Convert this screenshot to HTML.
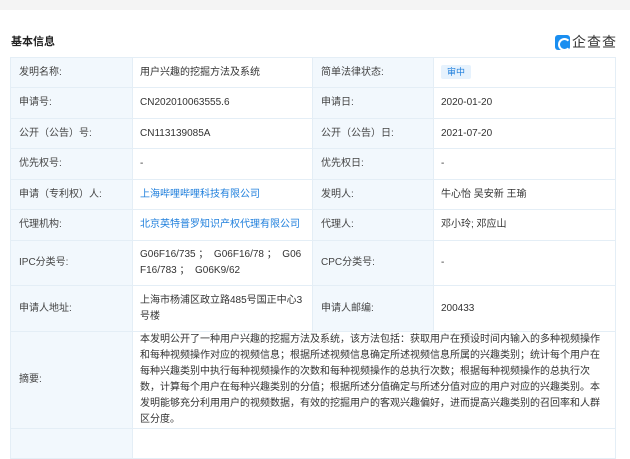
<!DOCTYPE html>
<html><head><meta charset="utf-8"><style>
*{margin:0;padding:0;box-sizing:border-box}
body{width:630px;height:431px;overflow:hidden;background:#fff;font-family:"Liberation Sans","Noto Sans CJK SC",sans-serif;color:#333;font-size:10px}
.top{height:10px;background:#f4f4f4}
.title{position:absolute;left:11px;top:33px;font-size:11px;font-weight:bold;color:#222}
.logo{position:absolute;left:555px;top:32px;display:flex;align-items:center}
.logo .ic{width:15px;height:15px;background:#1a8ef0;border-radius:3px;position:relative}
.logo .ic:after{content:"";position:absolute;left:3px;top:3px;width:9px;height:9px;border:2px solid #fff;border-radius:50%;border-right-color:transparent}
.logo span{font-size:14px;color:#333;margin-left:2px;letter-spacing:1px}
table{position:absolute;left:10px;top:57px;width:605px;border-collapse:collapse;table-layout:fixed}
td{border:1px solid #e4eef6;padding:0 7px;line-height:16px;vertical-align:middle;color:#333}
td.l{background:#f2f8fd;color:#444;padding-left:8px}
a{color:#1f7fdc;text-decoration:none}
.tag{display:inline-block;background:#e6f2fd;color:#1f7fdc;font-size:9px;padding:0 6px;line-height:14px;border-radius:2px}
</style></head><body>
<div class="top"></div>
<div class="title">基本信息</div>
<div class="logo"><div class="ic"></div><span>企查查</span></div>
<table>
<colgroup><col style="width:122px"><col style="width:180px"><col style="width:121px"><col style="width:182px"></colgroup>
<tr style="height:30px"><td class="l">发明名称:</td><td>用户兴趣的挖掘方法及系统</td><td class="l">简单法律状态:</td><td><span class="tag">审中</span></td></tr>
<tr style="height:31px"><td class="l">申请号:</td><td>CN202010063555.6</td><td class="l">申请日:</td><td>2020-01-20</td></tr>
<tr style="height:30px"><td class="l">公开（公告）号:</td><td>CN113139085A</td><td class="l">公开（公告）日:</td><td>2021-07-20</td></tr>
<tr style="height:31px"><td class="l">优先权号:</td><td>-</td><td class="l">优先权日:</td><td>-</td></tr>
<tr style="height:30px"><td class="l">申请（专利权）人:</td><td><a>上海哔哩哔哩科技有限公司</a></td><td class="l">发明人:</td><td>牛心怡 吴安新 王瑜</td></tr>
<tr style="height:31px"><td class="l">代理机构:</td><td><a>北京英特普罗知识产权代理有限公司</a></td><td class="l">代理人:</td><td>邓小玲; 邓应山</td></tr>
<tr style="height:45px"><td class="l">IPC分类号:</td><td style="word-break:break-all">G06F16/735 ；&nbsp; G06F16/78 ；&nbsp; G06F16/783 ；&nbsp; G06K9/62</td><td class="l">CPC分类号:</td><td>-</td></tr>
<tr style="height:46px"><td class="l">申请人地址:</td><td>上海市杨浦区政立路485号国正中心3号楼</td><td class="l">申请人邮编:</td><td>200433</td></tr>
<tr style="height:92px"><td class="l">摘要:</td><td colspan="3">本发明公开了一种用户兴趣的挖掘方法及系统，该方法包括：获取用户在预设时间内输入的多种视频操作和每种视频操作对应的视频信息；根据所述视频信息确定所述视频信息所属的兴趣类别；统计每个用户在每种兴趣类别中执行每种视频操作的次数和每种视频操作的总执行次数；根据每种视频操作的总执行次数，计算每个用户在每种兴趣类别的分值；根据所述分值确定与所述分值对应的用户对应的兴趣类别。本发明能够充分利用用户的视频数据，有效的挖掘用户的客观兴趣偏好，进而提高兴趣类别的召回率和人群区分度。</td></tr>
<tr style="height:30px"><td class="l"></td><td colspan="3"></td></tr>
</table>
</body></html>
